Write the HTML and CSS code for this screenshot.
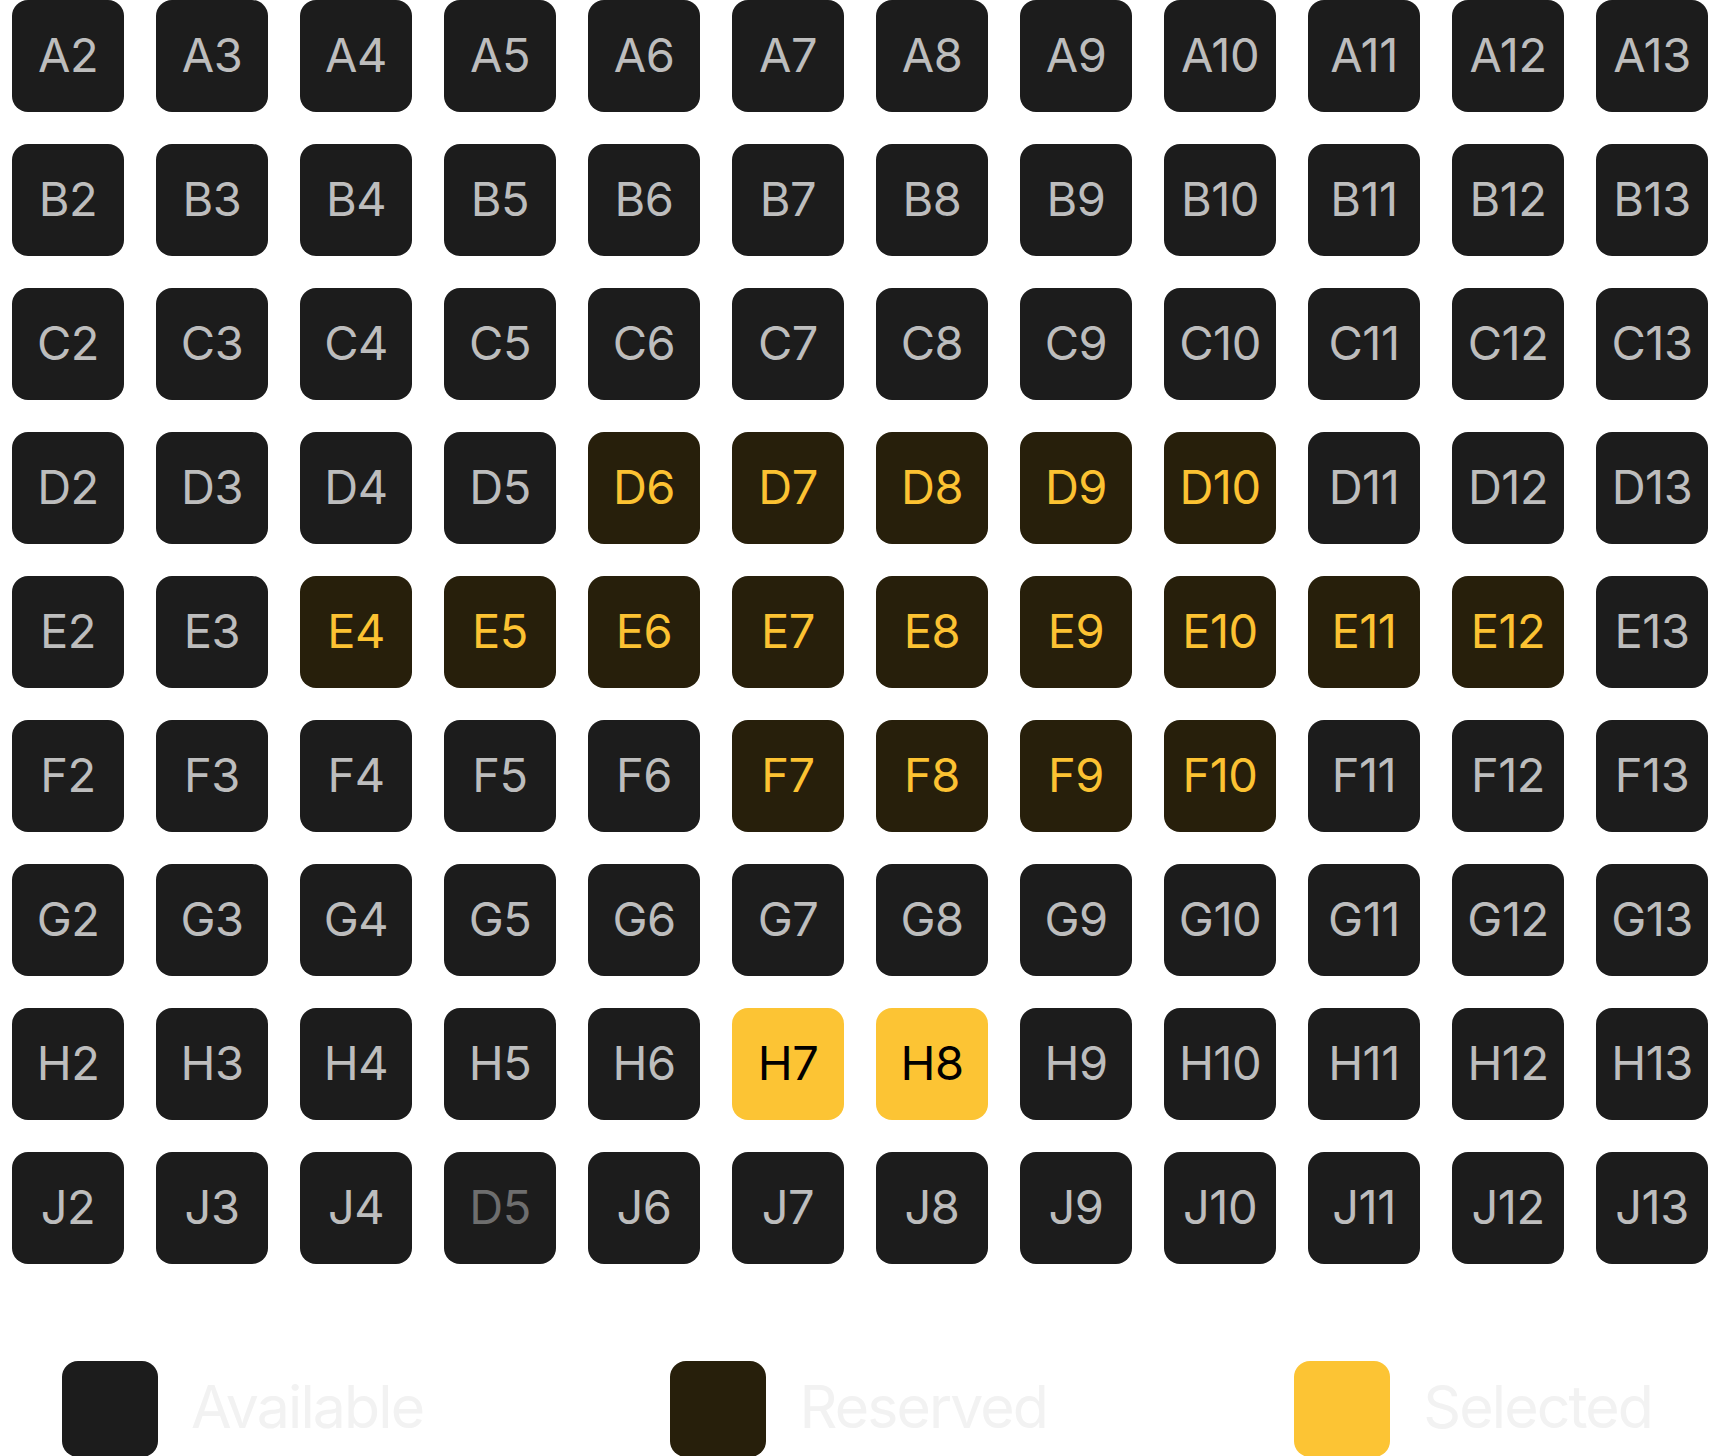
FILE: index.html
```html
<!DOCTYPE html>
<html lang="en">
<head>
<meta charset="utf-8">
<title>Seats</title>
<link rel="stylesheet" href="styles.css">
</head>
<body>
<main class="page">
  <div class="grid">
    <div class="seat">A2</div><div class="seat">A3</div><div class="seat">A4</div><div class="seat">A5</div><div class="seat">A6</div><div class="seat">A7</div><div class="seat">A8</div><div class="seat">A9</div><div class="seat">A10</div><div class="seat">A11</div><div class="seat">A12</div><div class="seat">A13</div>
    <div class="seat">B2</div><div class="seat">B3</div><div class="seat">B4</div><div class="seat">B5</div><div class="seat">B6</div><div class="seat">B7</div><div class="seat">B8</div><div class="seat">B9</div><div class="seat">B10</div><div class="seat">B11</div><div class="seat">B12</div><div class="seat">B13</div>
    <div class="seat">C2</div><div class="seat">C3</div><div class="seat">C4</div><div class="seat">C5</div><div class="seat">C6</div><div class="seat">C7</div><div class="seat">C8</div><div class="seat">C9</div><div class="seat">C10</div><div class="seat">C11</div><div class="seat">C12</div><div class="seat">C13</div>
    <div class="seat">D2</div><div class="seat">D3</div><div class="seat">D4</div><div class="seat">D5</div><div class="seat reserved">D6</div><div class="seat reserved">D7</div><div class="seat reserved">D8</div><div class="seat reserved">D9</div><div class="seat reserved">D10</div><div class="seat">D11</div><div class="seat">D12</div><div class="seat">D13</div>
    <div class="seat">E2</div><div class="seat">E3</div><div class="seat reserved">E4</div><div class="seat reserved">E5</div><div class="seat reserved">E6</div><div class="seat reserved">E7</div><div class="seat reserved">E8</div><div class="seat reserved">E9</div><div class="seat reserved">E10</div><div class="seat reserved">E11</div><div class="seat reserved">E12</div><div class="seat">E13</div>
    <div class="seat">F2</div><div class="seat">F3</div><div class="seat">F4</div><div class="seat">F5</div><div class="seat">F6</div><div class="seat reserved">F7</div><div class="seat reserved">F8</div><div class="seat reserved">F9</div><div class="seat reserved">F10</div><div class="seat">F11</div><div class="seat">F12</div><div class="seat">F13</div>
    <div class="seat">G2</div><div class="seat">G3</div><div class="seat">G4</div><div class="seat">G5</div><div class="seat">G6</div><div class="seat">G7</div><div class="seat">G8</div><div class="seat">G9</div><div class="seat">G10</div><div class="seat">G11</div><div class="seat">G12</div><div class="seat">G13</div>
    <div class="seat">H2</div><div class="seat">H3</div><div class="seat">H4</div><div class="seat">H5</div><div class="seat">H6</div><div class="seat selected">H7</div><div class="seat selected">H8</div><div class="seat">H9</div><div class="seat">H10</div><div class="seat">H11</div><div class="seat">H12</div><div class="seat">H13</div>
    <div class="seat">J2</div><div class="seat">J3</div><div class="seat">J4</div><div class="seat dim">D5</div><div class="seat">J6</div><div class="seat">J7</div><div class="seat">J8</div><div class="seat">J9</div><div class="seat">J10</div><div class="seat">J11</div><div class="seat">J12</div><div class="seat">J13</div>
  </div>
  <div class="legend">
    <div class="legend-item"><span class="swatch swatch-available"></span><span class="legend-label">Available</span></div>
    <div class="legend-item"><span class="swatch swatch-reserved"></span><span class="legend-label">Reserved</span></div>
    <div class="legend-item"><span class="swatch swatch-selected"></span><span class="legend-label">Selected</span></div>
  </div>
</main>
</body>
</html>
```

FILE: styles.css
```css
html, body {
  margin: 0;
  padding: 0;
  background: #ffffff;
}
body {
  font-family: Inter, "Noto Sans", "Liberation Sans", sans-serif;
}
.page {
  width: 1720px;
  height: 1456px;
  overflow: hidden;
}
.grid {
  display: grid;
  grid-template-columns: repeat(12, 112px);
  grid-auto-rows: 112px;
  gap: 32px;
  padding-left: 12px;
}
.seat {
  background: #1c1c1c;
  border-radius: 16px;
  color: #bdbdbd;
  font-size: 47px;
  letter-spacing: -0.5px;
  display: flex;
  align-items: center;
  justify-content: center;
  line-height: 1;
  padding-bottom: 3px;
  box-sizing: border-box;
}
.seat.reserved {
  background: #271f0b;
  color: #fcc232;
}
.seat.selected {
  background: #fcc434;
  color: #000000;
}
.seat.dim {
  color: #6e6e6e;
}
.legend {
  display: flex;
  justify-content: space-between;
  padding: 0 68px 0 62px;
  margin-top: 97px;
}
.legend-item {
  display: flex;
  align-items: center;
  gap: 33px;
}
.swatch {
  width: 96px;
  height: 96px;
  border-radius: 16px;
  flex: none;
}
.swatch-available { background: #1c1c1c; }
.swatch-reserved { background: #271f0b; }
.swatch-selected { background: #fcc434; }
.legend-label {
  font-size: 59px;
  letter-spacing: -1.9px;
  color: #f2f2f2;
  line-height: 1;
  padding-bottom: 6px;
}
```
